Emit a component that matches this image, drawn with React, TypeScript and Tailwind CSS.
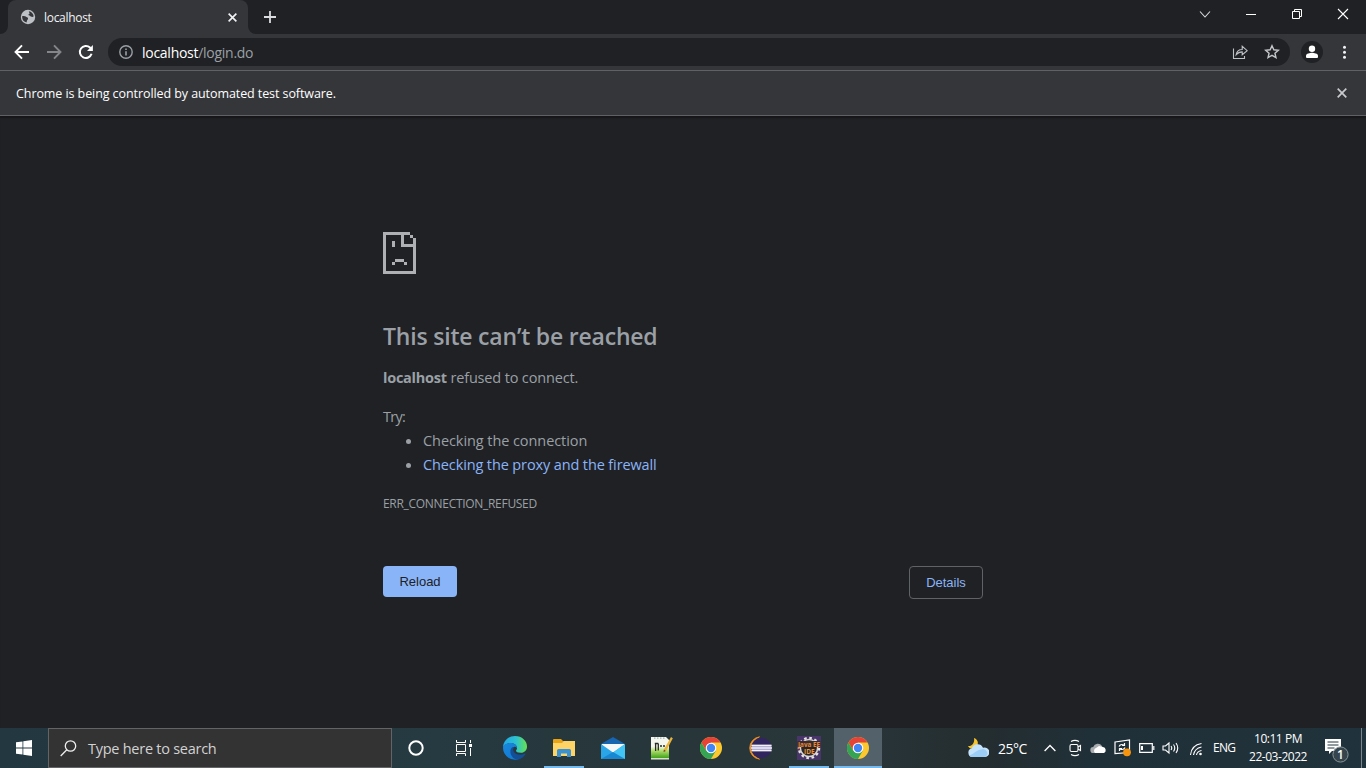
import React from "react";

const X = ({ size, className, w }: { size: number; className?: string; w: number }) => (
  <svg width={size} height={size} viewBox="0 0 10 10" className={className} stroke="currentColor" strokeWidth={w} fill="none">
    <path d="M.7.7l8.6 8.6M9.3.7L.7 9.3" />
  </svg>
);

function TabStrip() {
  return (
    <div className="flex h-[34px] shrink-0 bg-[#202124]">
      <svg width="8" height="34" className="shrink-0"><path d="M0 34h8v-8a8 8 0 0 1-8 8z" fill="#35363a" /></svg>
      <div className="flex w-[240px] items-center rounded-t-lg bg-[#35363a] pl-3 text-[#f1f3f4]">
        <svg width="16" height="16" viewBox="0 0 16 16">
          <circle cx="8" cy="8" r="7.2" fill="#bdc1c6" />
          <path d="M8.800 2.200c2.700.3 4.600 2.500 4.900 5-.9 1.200-1.600.5-2.300.5-.9 0-1.100-.9-2-1.100-1.200-.2-1.200-1.200-.3-1.500 1.100-.4 0-1.300-.3-2.900zM2.200 7.100c1.400-.2 2.800-.3 3.600.5.7.8 1.800.6 2.200 1.600.4 1.100-.8 1.200-1 2.300-.1.900-.4 1.600-.5 2.100A6 6 0 0 1 2.200 7.100z" fill="#35363a" />
        </svg>
        <span className="ml-2 w-[183px] pt-px text-[12px] leading-4 tracking-[-0.300px]">localhost</span>
        <X size={9} w={1.8} className="ml-[0.5px]" />
      </div>
      <svg width="8" height="34" className="shrink-0"><path d="M8 34H0v-8a8 8 0 0 0 8 8z" fill="#35363a" /></svg>
      <svg width="12" height="12" className="ml-2 mt-[11px]" stroke="#dadce0" strokeWidth="1.8"><path d="M6 0v12M0 6h12" /></svg>
      <div className="ml-auto flex h-7 items-center text-white">
        <svg width="46" height="28" fill="none" stroke="#dadce0" strokeWidth="1.1"><path d="M18 11.500l5 5.500 5-5.500" /></svg>
        <svg width="46" height="28" fill="none" stroke="currentColor"><path d="M18 14.500h10" /></svg>
        <svg width="46" height="28" fill="none" stroke="currentColor"><path d="M18.500 11.500h7v7h-7zM20.500 11V9.500h7v7H26" /></svg>
        <svg width="46" height="28" fill="none" stroke="currentColor" strokeWidth="1.1"><path d="M18 9l10 10M28 9L18 19" /></svg>
      </div>
    </div>
  );
}

function Toolbar() {
  return (
    <div className="flex h-9 shrink-0 items-center bg-[#35363a] pl-[14px]">
      <svg width="16" height="16" fill="none" stroke="#fff" strokeWidth="1.9"><path d="M15 8H2M8 1.300L1.500 8 8 14.700" /></svg>
      <svg width="16" height="16" fill="none" stroke="#85868a" strokeWidth="1.9" className="ml-4"><path d="M1 8h13M8 1.300L14.500 8 8 14.700" /></svg>
      <svg width="16" height="16" fill="none" stroke="#fff" strokeWidth="2" className="ml-4">
        <path d="M13.600 9.800A6 6 0 1 1 12 3.600l1.500 1.500" /><path d="M14.900 1v6H9z" fill="#fff" stroke="none" />
      </svg>
      <div className="ml-[14px] flex h-7 w-[1182px] items-center rounded-full bg-[#202124] pl-[11px] pr-[10px]">
        <svg width="14" height="14" fill="none" stroke="#9aa0a6" strokeWidth="1.4"><circle cx="7" cy="7" r="6.200" /><path d="M7 6.200v4.300M7 3.500v1.500" strokeWidth="1.600" /></svg>
        <span className="ml-[9px] pt-px text-[14px] leading-5 tracking-[-0.270px] text-[#9aa0a6]"><span className="text-white">localhost</span>/login.do</span>
        <svg width="16" height="16" fill="none" stroke="#bdc1c6" strokeWidth="1.1" className="ml-auto">
          <path d="M1.500 4.500v10h11v-2.500" /><path d="M4.200 10.700c.5-3.500 2.500-5.200 6-5.200V2.300l5 4.400-5 4.100V7.900c-2.800 0-4.400.8-6 2.800z" />
        </svg>
        <svg width="16" height="16" viewBox="0 0 16 16" fill="none" stroke="#c4c7ca" strokeWidth="1.400" className="ml-4">
          <path d="M8 1.700l1.850 4.100 4.500.45-3.400 3 1 4.400L8 11.300l-3.950 2.350 1-4.400-3.400-3 4.500-.45z" />
        </svg>
      </div>
      <svg width="22" height="22" className="ml-[11px]"><circle cx="11" cy="11" r="11" fill="#202124" /><circle cx="11" cy="7.800" r="3.200" fill="#fff" /><path d="M5 16v-1.300c0-2 4-2.900 6-2.900s6 .9 6 2.900V16q0 .9-1 .9H6q-1 0-1-.9z" fill="#fff" /></svg>
      <svg width="4" height="16" fill="#f1f3f4" className="ml-[20px]"><circle cx="1.500" cy="3.300" r="1.500" /><circle cx="1.500" cy="8.300" r="1.500" /><circle cx="1.500" cy="13.300" r="1.500" /></svg>
    </div>
  );
}

function ErrorPage() {
  return (
    <main className="flex-1 bg-[#202124] pt-[116px] text-[15px] leading-6 text-[#9aa0a6] shadow-[inset_0_3px_2px_-1px_#17171a]">
      <div className="ml-[383px] w-[600px]">
        <svg width="33" height="42" viewBox="0 0 11 14" fill="#aeb0b3" shapeRendering="crispEdges">
          <path d="M0 0h9v1h1v1h1v12H0zM1 1v12h9V5H6V1zM7 1v3h3V2H9V1z" fillRule="evenodd" />
          <path d="M3 3h1v2H3zM4 9h3v1H4zM3 10h1v1H3zM7 10h1v1H7z" />
        </svg>
        <h1 className="mt-[48px] text-[23px] font-semibold leading-[29px] tracking-[-0.200px] whitespace-nowrap">This site can’t be reached</h1>
        <p className="mt-[15px] text-[14.500px] tracking-[-0.160px]"><strong className="font-bold tracking-[-0.250px]">localhost</strong> refused to connect.</p>
        <p className="mt-[15px] text-[14.500px] tracking-[-0.700px]">Try:</p>
        <ul className="text-[14.500px]">
          <li className="flex items-center tracking-[-0.070px]"><span className="ml-[23px] mr-[12px] size-[5px] rounded-full bg-[#9aa0a6]" />Checking the connection</li>
          <li className="flex items-center tracking-[-0.120px]"><span className="ml-[23px] mr-[12px] size-[5px] rounded-full bg-[#9aa0a6]" /><a className="text-[#8ab4f8]">Checking the proxy and the firewall</a></li>
        </ul>
        <p className="mt-[15px] text-[12px] tracking-[-0.300px]">ERR_CONNECTION_REFUSED</p>
        <div className="mt-[50px] flex items-start justify-between font-['Liberation_Sans',sans-serif] text-[13px]">
          <button className="h-[31px] w-[74px] rounded-[4px] bg-[#8ab4f8] text-[#202124]">Reload</button>
          <button className="h-[33px] w-[74px] rounded-[4px] border border-[#5f6368] text-[#8ab4f8]">Details</button>
        </div>
      </div>
    </main>
  );
}

const Chrome = () => (
  <svg width="22" height="22" viewBox="0 0 22 22">
    <circle cx="11" cy="11" r="11" fill="#fbc92f" />
    <path d="M1.470 5.500A11 11 0 0 1 20.530 5.500H11L6.240 13.750z" fill="#e54335" />
    <path d="M1.470 5.500A11 11 0 0 0 11 22l4.760-8.250H6.240z" fill="#34a353" />
    <circle cx="11" cy="11" r="5.300" fill="#fff" /><circle cx="11" cy="11" r="4.200" fill="#4285f4" />
  </svg>
);

const Edge = () => (
  <svg width="24" height="24" viewBox="0 0 24 24">
    <defs>
      <linearGradient id="ea" x1="0" x2="1"><stop offset="0" stopColor="#21a6e8" /><stop offset=".55" stopColor="#2dc2cf" /><stop offset="1" stopColor="#66e34f" /></linearGradient>
      <linearGradient id="eb" x1="0" y1="0" x2=".6" y2="1"><stop offset="0" stopColor="#1b87da" /><stop offset="1" stopColor="#0f7bd4" /></linearGradient>
    </defs>
    <path d="M0 12C0 5 5.200 0 12 0c7 0 12 4.900 12 10.400 0 4-3 6.300-6.300 6.300-3 0-4.700-1-4.700-2 0-.6 1-.9 1-2.700C14 9.500 11.500 7 7.800 7 3.500 7 0 10 0 12z" fill="url(#ea)" />
    <path d="M0 12c0-3 3.500-5 7.800-5 3.700 0 6.200 2.500 6.200 5-3-3-5.500.5-5.500 3 0 4 3.500 8 8 7.800A12 12 0 0 1 0 12z" fill="url(#eb)" />
    <path d="M9.200 11.300c-4 3.500-1.200 11.700 5.300 12.400 3.500-.4 6.500-2.600 8-5.600.3-.6-.3-.8-.8-.5-4.500 2.400-9.700.9-11.200-2.300-.7-1.500-.2-3.100.8-4z" fill="#134f96" />
  </svg>
);

const Explorer = () => (
  <svg width="22" height="18" viewBox="0 0 22 18">
    <path d="M0 1q0-1 1-1h7l2 2h11q1 0 1 1v14H0z" fill="#e8a317" /><path d="M0 4h9l2-2h11v15H0z" fill="#ffd466" />
    <path d="M4 18v-6.500Q4 10 5.500 10h11q1.500 0 1.500 1.500V18h-4v-3.500H8V18z" fill="#3b92d2" />
  </svg>
);

const Mail = () => (
  <svg width="24" height="22" viewBox="0 0 24 22">
    <path d="M0 7l12-7 12 7v3H0z" fill="#1765b0" /><path d="M1 7h22v9H1z" fill="#f4f6f8" />
    <path d="M0 7l12 8.500L24 7v15H0z" fill="#29a5e8" /><path d="M24 7L12 15.500 21.500 22H24z" fill="#42c4f5" /><path d="M0 22l12-7 12 7z" fill="#1888d3" />
  </svg>
);

const Notepad = () => (
  <svg width="22" height="24" viewBox="0 0 22 24">
    <defs><linearGradient id="np" x1="0" x2="0" y1="0" y2="1"><stop offset=".42" stopColor="#f4f7ee" /><stop offset=".6" stopColor="#b4e070" /><stop offset=".92" stopColor="#45a51c" /><stop offset=".96" stopColor="#e2ecd9" /></linearGradient></defs>
    <path d="M0 1h15l3 3v19.500H0z" fill="url(#np)" />
    <path d="M3 2.200h11" stroke="#a7afb5" strokeWidth="1.200" strokeDasharray="1.500 1.500" />
    <path d="M4.600 7v8M7.300 7.500v7M3.800 7.500h3.500M9 10h2M12 10h2" stroke="#252b26" strokeWidth="1.300" fill="none" />
    <path d="M20 1l1.800 1.200-6.500 12.500-2.700 1.300.6-3z" fill="#e9b43b" /><path d="M12.900 13.500l1.900 1.400-2.200 1.100z" fill="#5d492d" />
  </svg>
);

const Eclipse = () => (
  <svg width="24" height="24" viewBox="0 0 24 24">
    <path d="M11.500.8a11.300 11.300 0 0 0 0 22.400A12.500 12.500 0 0 1 11.500.8z" fill="#f59422" stroke="#f59422" strokeWidth=".8" />
    <circle cx="13.300" cy="12" r="10.300" fill="#30265d" />
    <path d="M3.500 8.700h20v6.600h-20z" fill="#9f98c4" />
    <path d="M3.500 9.500h20M3 12h21M3.500 14.500h20" stroke="#f2f0f8" strokeWidth="1.500" />
  </svg>
);

const JavaEE = () => (
  <svg width="24" height="24" viewBox="0 0 24 24">
    <path d="M0 0h24v24H0z" fill="#48356a" />
    <circle cx="12" cy="12" r="10" fill="none" stroke="#e6e4df" strokeWidth="2.400" strokeDasharray="2.600 2.636" />
    <circle cx="12" cy="12" r="8.600" fill="#282629" stroke="#d8d5cf" strokeWidth="1.500" />
    <path d="M.5 5h23v6H.5z" fill="#3a2b31" />
    <text x="1" y="10.600" textLength="22" lengthAdjust="spacingAndGlyphs" fontSize="7" fontWeight="700" fill="#e5882f">Java EE</text>
    <text x="7" y="17.800" textLength="10.500" lengthAdjust="spacingAndGlyphs" fontSize="7" fontWeight="700" fill="#ed943a">IDE</text>
  </svg>
);

const apps = [
  { name: "edge", icon: <Edge /> },
  { name: "explorer", icon: <Explorer />, open: true },
  { name: "mail", icon: <Mail /> },
  { name: "notepad", icon: <Notepad /> },
  { name: "chrome", icon: <Chrome /> },
  { name: "eclipse", icon: <Eclipse /> },
  { name: "javaee", icon: <JavaEE />, open: true },
  { name: "chrome-test", icon: <Chrome />, active: true },
];

function Taskbar() {
  return (
    <div className="flex h-10 shrink-0 items-center bg-[linear-gradient(90deg,#233740_0%,#263a41_32%,#27363a_46%,#29363a_62%,#242d30_72%,#203038_80%,#20323b_100%)] text-white">
      <svg width="48" height="40" fill="#fff"><path d="M16 14.300l6.500-.9v6.200H16zM23.300 13.300L32 12v7.600h-8.700zM16 20.400h6.500v6.200l-6.500-.9zM23.300 20.400H32V28l-8.700-1.200z" /></svg>
      <div className="flex h-10 w-[344px] items-center border border-[#626465] bg-[#333334] pl-[11px]">
        <svg width="17" height="17" fill="none" stroke="#eee" strokeWidth="1.300"><circle cx="10.500" cy="6" r="5.200" /><path d="M6.800 9.800L.7 16" /></svg>
        <span className="ml-[11px] pt-[2px] text-[14.500px] leading-5 tracking-[-0.260px] text-[#d2d2d2]">Type here to search</span>
      </div>
      <svg width="48" height="40" fill="none" stroke="#fff" strokeWidth="2"><circle cx="24" cy="20" r="6.700" /></svg>
      <svg width="48" height="40" fill="none" stroke="#fff" className="mr-[3px]"><path d="M16.500 12v2.500h9V12M16.500 28v-2.500h9V28M16.500 16.500h9v7h-9zM30.500 12v3M30.500 20v8" /><path d="M29 16h3v3h-3z" fill="#fff" stroke="none" /></svg>
      {apps.map((a) => (
        <div key={a.name} className={a.active ? "mr-px flex h-10 w-12 items-center justify-center border-b-2 border-[#76b9ed] bg-[#52616a] pt-[2px]" : "mr-px flex h-10 w-12 flex-col items-center justify-center"}>
          {a.open ? <div className="flex h-10 w-10 items-center justify-center border-b-2 border-[#76b9ed] pt-[2px]">{a.icon}</div> : a.icon}
        </div>
      ))}
      <div className="ml-auto flex h-10 items-center">
        <svg width="22" height="20" viewBox="0 0 22 20">
          <path d="M7 0c5 1.500 5 8 1 10-3 1.500-6 .3-7-2 4 .4 7-3 6-8z" fill="#f6c42e" />
          <path d="M5.500 19a4.400 4.400 0 0 1-.6-8.700A6 6 0 0 1 16 9.700 4.800 4.800 0 1 1 17 19z" fill="#c4e3fb" /><path d="M2 17.500c4-1 8-6 14-6.500 4 .5 7 6 1 8H5.500q-2 0-3.500-1.500z" fill="#9bcdf6" />
        </svg>
        <span className="ml-[9px] w-[46px] pt-px text-[14px] leading-5 tracking-[-0.500px]">25°C</span>
        <svg width="12" height="8" fill="none" stroke="#fff" strokeWidth="1.300"><path d="M.6 7L6 1.500 11.400 7" /></svg>
        <svg width="14" height="18" fill="none" stroke="#fff" strokeWidth="1.100" className="ml-[12px]"><rect x="2" y="5.500" width="8" height="7" rx="1.500" /><path d="M10 8l2.500-1.500v5L10 10M3 2.500Q7 .3 11 2.500M3 15.500Q7 17.700 11 15.500" /></svg>
        <svg width="17" height="12" viewBox="0 0 17 12" className="ml-[8px]"><path d="M3.500 11a3 3 0 0 1-.3-6A5 5 0 0 1 12 4l1 7z" fill="#a9acae" /><path d="M5 11a3 3 0 0 1 1-5l3-2 4 1a3.200 3.200 0 0 1 1 6z" fill="#fff" /></svg>
        <svg width="18" height="18" fill="none" stroke="#fff" strokeWidth="1.200" className="ml-[7px]"><path d="M1 3l14.500-2v12.500L1 14.500zM5 7.500q1.500-3 5-1.500M10.500 4v2.500H8M11 8.500q-1.500 3-5 1.500M5.500 12V9.500H8" /><circle cx="13" cy="13.300" r="3.900" fill="#f7940d" stroke="none" /></svg>
        <svg width="16" height="10" fill="none" stroke="#fff" strokeWidth="1.200" className="ml-[7px]"><path d="M.7.7h12.600v8.600H.7zM14.800 3v4" /><path d="M3 3v4" strokeWidth="2" /></svg>
        <svg width="18" height="14" fill="none" stroke="#fff" strokeWidth="1.100" className="ml-[7px]"><path d="M1 5h2.500L7 2v10L3.500 9H1zM9 5q1.500 2 0 4M11.500 3.500q2.500 3.500 0 7M14 2q3.500 5 0 10" /></svg>
        <svg width="15" height="15" fill="none" stroke="#fff" strokeWidth="1.100" className="ml-[9px] mt-[3px]"><path d="M1.500 13Q2.500 3 12.500 1.500M4.500 13Q5.500 6.500 12.500 5M7.500 13Q8 9.500 12.500 8.500" /><circle cx="11.500" cy="12" r="1.300" fill="#fff" stroke="none" /></svg>
        <span className="ml-[9px] w-[25px] text-[12px] leading-4 tracking-[-0.700px]">ENG</span>
        <div className="ml-[4px] w-[72px] whitespace-nowrap text-center text-[12px] leading-[18px] tracking-[-0.470px]"><div>10:11 PM</div><div>22-03-2022</div></div>
        <svg width="26" height="26" className="ml-[10px] mt-[4px]">
          <path d="M1 2h16v12H8l-3 3v-3H1z" fill="#fff" /><path d="M3.500 5h11M3.500 8h11M3.500 11h7" stroke="#23343c" />
          <circle cx="16.500" cy="17.500" r="7.600" fill="#36454c" stroke="#87949a" /><text x="16.500" y="21.700" fontSize="12" fontWeight="600" textAnchor="middle" fill="#fff">1</text>
        </svg>
        <span className="ml-[11px] mr-[4px] h-10 w-px bg-[#7a868b]" />
      </div>
    </div>
  );
}

export default function App() {
  return (
    <div className="flex h-[768px] w-[1366px] flex-col overflow-hidden bg-[#202124] font-['Open_Sans','Noto_Sans',sans-serif]">
      <TabStrip />
      <Toolbar />
      <div className="flex h-[46px] shrink-0 items-center justify-between border-y border-[#606165] bg-[#35363a] pl-4 pr-[19px] text-[12.500px] leading-5 tracking-[-0.080px] text-white">
        <span className="pt-px">Chrome is being controlled by automated test software.</span>
        <X size={10} w={1.700} className="text-[#c8cacd]" />
      </div>
      <ErrorPage />
      <Taskbar />
    </div>
  );
}
